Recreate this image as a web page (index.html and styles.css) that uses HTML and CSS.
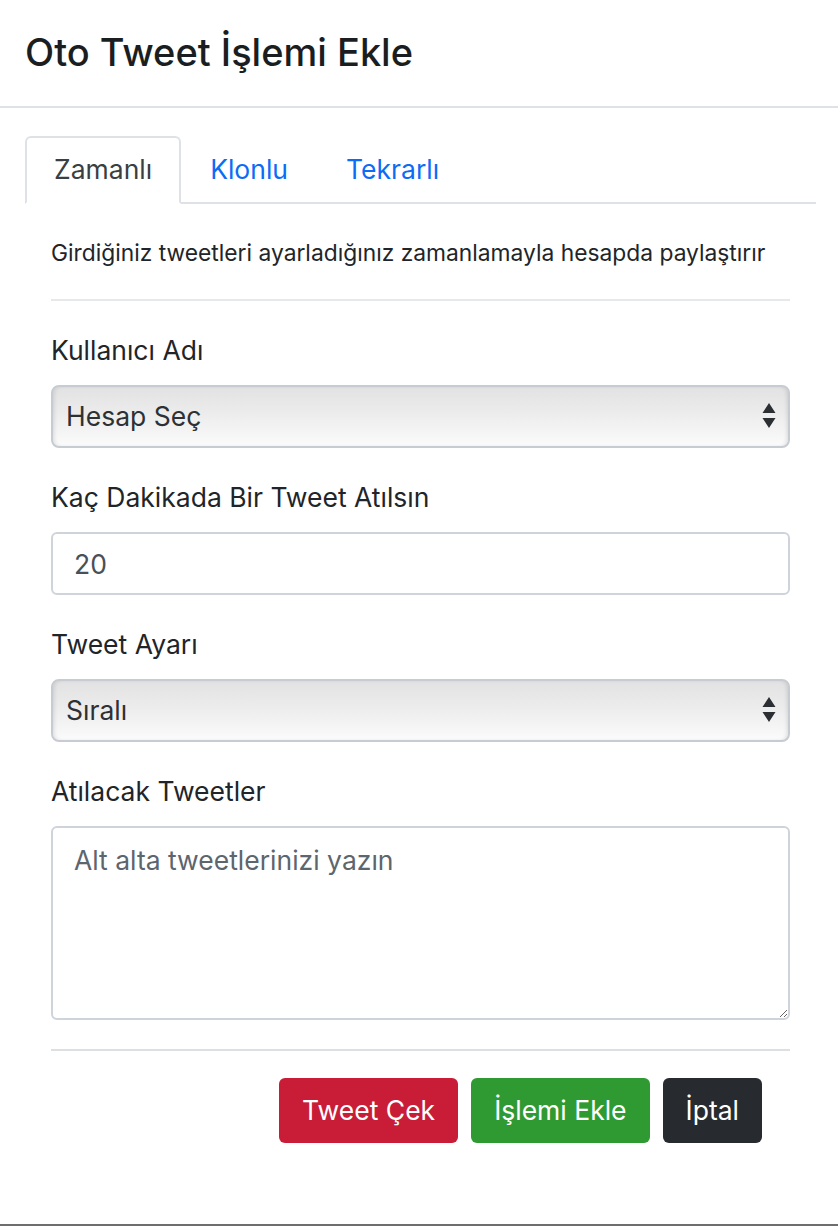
FILE: index.html
```html
<!DOCTYPE html>
<html lang="tr">
<head>
<meta charset="utf-8">
<title>Oto Tweet İşlemi Ekle</title>
<link rel="stylesheet" href="styles.css">
</head>
<body>
<div class="modal">
  <div class="modal-header">
    <h5 class="modal-title">Oto Tweet İşlemi Ekle</h5>
  </div>
  <div class="modal-body">
    <ul class="nav-tabs">
      <li><a class="nav-link active">Zamanlı</a></li>
      <li><a class="nav-link">Klonlu</a></li>
      <li><a class="nav-link">Tekrarlı</a></li>
    </ul>
    <div class="tab-pane">
      <p class="desc">Girdiğiniz tweetleri ayarladığınız zamanlamayla hesapda paylaştırır</p>
      <hr class="divider">
      <div class="form-group">
        <label class="form-label">Kullanıcı Adı</label>
        <div class="select-wrap">
          <select class="native-select"><option>Hesap Seç</option></select>
          <svg class="select-arrows" width="14" height="26" viewBox="0 0 14 26"><path d="M7 0 L13.5 10 L0.5 10 Z M0.5 15 L13.5 15 L7 25 Z" fill="#2b2f33"/></svg>
        </div>
      </div>
      <div class="form-group">
        <label class="form-label">Kaç Dakikada Bir Tweet Atılsın</label>
        <input class="form-control" type="text" value="20">
      </div>
      <div class="form-group">
        <label class="form-label">Tweet Ayarı</label>
        <div class="select-wrap">
          <select class="native-select"><option>Sıralı</option></select>
          <svg class="select-arrows" width="14" height="26" viewBox="0 0 14 26"><path d="M7 0 L13.5 10 L0.5 10 Z M0.5 15 L13.5 15 L7 25 Z" fill="#2b2f33"/></svg>
        </div>
      </div>
      <div class="form-group">
        <label class="form-label">Atılacak Tweetler</label>
        <textarea class="form-control textarea" placeholder="Alt alta tweetlerinizi yazın"></textarea>
      </div>
      <hr class="divider bottom">
      <div class="actions">
        <button class="btn btn-danger">Tweet Çek</button>
        <button class="btn btn-success">İşlemi Ekle</button>
        <button class="btn btn-dark">İptal</button>
      </div>
    </div>
  </div>
</div>
</body>
</html>
```

FILE: styles.css
```css
* { box-sizing: border-box; }
html, body { margin: 0; padding: 0; background: #fff; }
body {
  font-family: Inter, "Noto Sans", "Liberation Sans", sans-serif;
  color: #212529;
  font-size: 26.5px;
  line-height: 1.5;
}
.modal {
  height: 1226px;
  border-bottom: 2px solid #6e6e6e;
}
.modal-header {
  padding: 28px 25px 30px;
  border-bottom: 2px solid #dee2e6;
}
.modal-title {
  margin: 0;
  font-size: 38px;
  font-weight: 500;
  line-height: 48px;
  color: #1b1e21;
}
.modal-body {
  padding: 28px 22px 0 25px;
}
.nav-tabs {
  list-style: none;
  margin: 0;
  padding: 0;
  display: flex;
  border-bottom: 2px solid #dee2e6;
}
.nav-tabs li { margin-bottom: -2px; }
.nav-link {
  display: block;
  padding: 12px 27px 14px;
  border: 2px solid transparent;
  border-top-left-radius: 6px;
  border-top-right-radius: 6px;
  color: #0b6cf6;
  line-height: 38px;
  cursor: pointer;
}
.nav-link.active {
  color: #3a3f44;
  background: #fff;
  border-color: #dee2e6 #dee2e6 #fff;
}
.tab-pane {
  padding: 0 26px 0 26px;
}
.desc {
  margin: 34px 0 0;
  font-size: 22.8px;
  line-height: 30px;
  color: #212529;
}
.divider {
  margin: 31px 0 29px;
  border: 0;
  border-top: 2px solid #e6e8ea;
}
.form-group {
  margin-bottom: 29px;
}
.form-label {
  display: block;
  line-height: 40px;
  margin-bottom: 15px;
}
.select-wrap {
  position: relative;
}
.native-select {
  display: block;
  width: 100%;
  height: 63px;
  -webkit-appearance: none;
  appearance: none;
  font: inherit;
  color: #2e3134;
  padding: 0 40px 0 13px;
  border: 2px solid #c7cbd2;
  border-radius: 8px;
  background: linear-gradient(#e2e2e2 0%, #ececec 45%, #fbfbfb 100%);
  box-shadow: inset 3px 0 4px -2px rgba(0,0,0,0.12), inset -3px 0 4px -2px rgba(0,0,0,0.12);
}
.select-arrows {
  position: absolute;
  right: 14px;
  top: 18px;
  pointer-events: none;
}
.form-control {
  display: block;
  width: 100%;
  height: 63px;
  font: inherit;
  color: #495057;
  padding: 10px 21px;
  border: 2px solid #ced4da;
  border-radius: 6px;
  background: #fff;
}
.textarea {
  height: 194px;
  resize: vertical;
  padding: 12px 21px;
  line-height: 40px;
}
.textarea::placeholder { color: #5d656d; }
.divider.bottom {
  margin: 0 0 27px;
  border-top-color: #dde0e3;
}
.actions {
  display: flex;
  justify-content: flex-end;
  gap: 13px;
  padding-right: 28px;
}
.btn {
  font: inherit;
  color: #fff;
  border: 0;
  border-radius: 6px;
  padding: 13px 23px 14px;
  line-height: 38px;
  cursor: pointer;
}
.btn-danger { background: #c91c37; }
.btn-success { background: #2f9a32; }
.btn-dark { background: #272b2f; }
```
